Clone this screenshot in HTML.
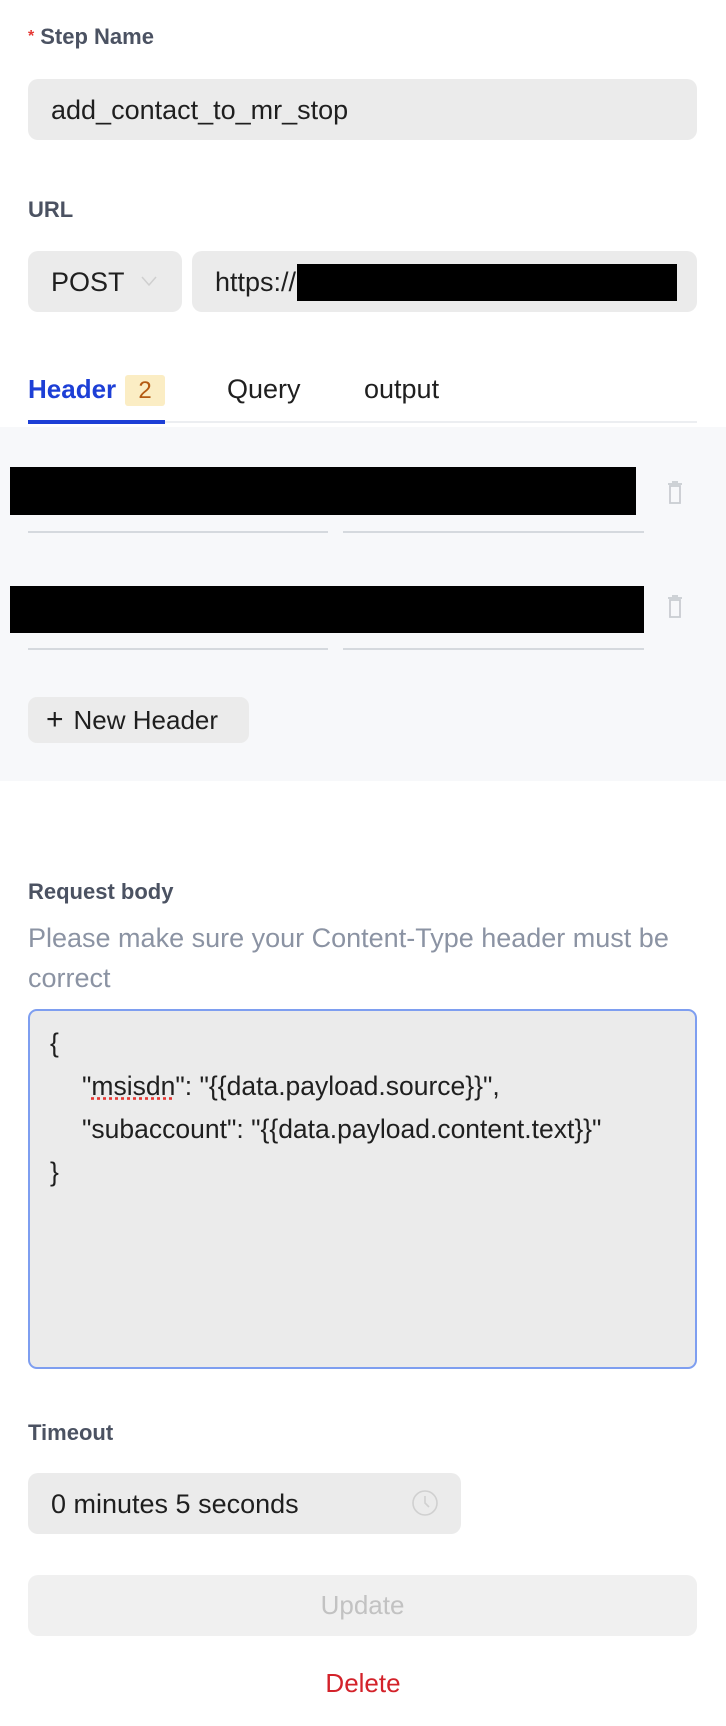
<!DOCTYPE html>
<html><head><meta charset="utf-8"><style>
*{margin:0;padding:0;box-sizing:border-box}
body{width:726px;height:1726px;background:#fff;position:relative;font-family:"Liberation Sans",Arial,sans-serif;overflow:hidden}
.a{position:absolute}
.lbl{font-weight:bold;font-size:22px;color:#4b5262;line-height:26px}
.inp{background:#ebebeb;border-radius:10px}
.t{font-size:27px;color:#1f1f1f;line-height:30px}
</style></head><body>
<div class="a lbl" style="left:28px;top:24px"><span style="color:#e53935;font-size:16px;vertical-align:top;margin-right:6px">*</span>Step Name</div>
<div class="a inp" style="left:28px;top:79px;width:669px;height:61px"></div>
<div class="a t" style="left:51px;top:95px">add_contact_to_mr_stop</div>

<div class="a lbl" style="left:28px;top:197px">URL</div>
<div class="a inp" style="left:28px;top:251px;width:154px;height:61px"></div>
<div class="a t" style="left:51px;top:267px">POST</div>
<svg class="a" style="left:140px;top:274px" width="18" height="14" viewBox="0 0 18 14"><path d="M2 3l7 8 7-8" fill="none" stroke="#cfcfcf" stroke-width="1.5"/></svg>
<div class="a inp" style="left:192px;top:251px;width:505px;height:61px"></div>
<div class="a t" style="left:215px;top:267px">https://</div>
<div class="a" style="left:297px;top:264px;width:380px;height:37px;background:#000"></div>

<div class="a" style="left:165px;top:421px;width:532px;height:2px;background:#eceef1"></div>
<div class="a" style="left:28px;top:374px;font-size:26px;font-weight:bold;color:#1d3fd6;line-height:30px">Header</div>
<div class="a" style="left:125px;top:375px;width:40px;height:31px;background:#fbedc4;border-radius:3px;color:#b45a12;font-size:24px;text-align:center;line-height:31px">2</div>
<div class="a t" style="left:227px;top:374px">Query</div>
<div class="a t" style="left:364px;top:374px">output</div>
<div class="a" style="left:28px;top:420px;width:137px;height:4px;background:#1d3fd6"></div>

<div class="a" style="left:0;top:427px;width:726px;height:354px;background:#f7f8fa"></div>
<div class="a" style="left:10px;top:467px;width:626px;height:48px;background:#000"></div>
<div class="a" style="left:28px;top:531px;width:300px;height:2px;background:#d5d9de"></div>
<div class="a" style="left:343px;top:531px;width:301px;height:2px;background:#d5d9de"></div>
<div class="a" style="left:10px;top:586px;width:634px;height:47px;background:#000"></div>
<div class="a" style="left:28px;top:648px;width:300px;height:2px;background:#d5d9de"></div>
<div class="a" style="left:343px;top:648px;width:301px;height:2px;background:#d5d9de"></div>
<svg class="a" style="left:664px;top:479px" width="22" height="28" viewBox="0 0 22 28"><path d="M4 5h14M8 3h6M6 7h10v17H6z" fill="none" stroke="#c9ccd1" stroke-width="1.8"/></svg>
<svg class="a" style="left:664px;top:593px" width="22" height="28" viewBox="0 0 22 28"><path d="M4 5h14M8 3h6M6 7h10v17H6z" fill="none" stroke="#c9ccd1" stroke-width="1.8"/></svg>
<div class="a" style="left:28px;top:697px;width:221px;height:46px;background:#ebebeb;border-radius:9px"></div>
<div class="a" style="left:46px;top:705px;font-size:26px;color:#1f1f1f;line-height:30px"><span style="font-size:30px;margin-right:10px">+</span>New Header</div>

<div class="a lbl" style="left:28px;top:879px">Request body</div>
<div class="a" style="left:28px;top:918px;font-size:27px;color:#8b93a3;line-height:40px;width:698px;white-space:nowrap">Please make sure your Content-Type header must be<br>correct</div>
<div class="a" style="left:28px;top:1009px;width:669px;height:360px;background:#ebebeb;border:2px solid #7e9ef0;border-radius:9px"></div>
<div class="a" style="left:50px;top:1022px;font-size:26.5px;color:#1f1f1f;line-height:43px;white-space:pre">{</div>
<div class="a" style="left:82px;top:1065px;font-size:26.5px;color:#1f1f1f;line-height:43px;white-space:pre">"<span style="text-decoration:underline dotted #e53935">msisdn</span>": "{{data.payload.source}}",
"subaccount": "{{data.payload.content.text}}"</div>
<div class="a" style="left:50px;top:1151px;font-size:26.5px;color:#1f1f1f;line-height:43px;white-space:pre">}</div>

<div class="a lbl" style="left:28px;top:1420px">Timeout</div>
<div class="a inp" style="left:28px;top:1473px;width:433px;height:61px"></div>
<div class="a t" style="left:51px;top:1489px">0 minutes 5 seconds</div>
<svg class="a" style="left:411px;top:1489px" width="28" height="28" viewBox="0 0 28 28"><circle cx="14" cy="14" r="12" fill="none" stroke="#d0d0d0" stroke-width="1.6"/><path d="M14 7v7l4 4" fill="none" stroke="#d0d0d0" stroke-width="1.6"/></svg>
<div class="a" style="left:28px;top:1575px;width:669px;height:61px;background:#f0f0f0;border-radius:10px;text-align:center;line-height:61px;font-size:26px;color:#c2c2c2">Update</div>
<div class="a" style="left:0;top:1668px;width:726px;text-align:center;font-size:26px;color:#d3222a;line-height:30px">Delete</div>
</body></html>
